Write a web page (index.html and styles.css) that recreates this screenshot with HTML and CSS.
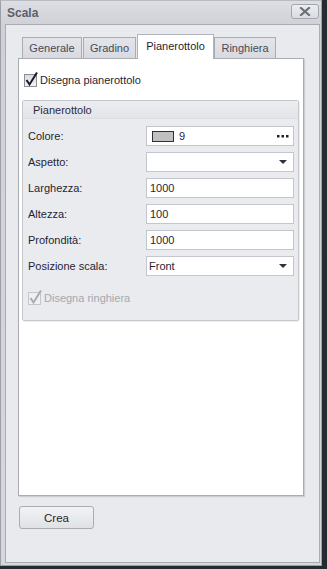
FILE: index.html
```html
<!DOCTYPE html>
<html lang="it">
<head>
    <meta charset="UTF-8">
    <meta name="viewport" content="width=device-width, initial-scale=1.0">
    <title>Scala</title>
    <link rel="stylesheet" href="styles.css">
</head>
<body>
    <div class="window">
        <div class="titlebar">
            <span class="title">Scala</span>
            <button class="close-btn">
                <svg width="12" height="9" viewBox="0 0 12 9">
                    <path d="M2 1 L10 8 M10 1 L2 8" stroke="#6b6f78" stroke-width="2.2" stroke-linecap="square"/>
                </svg>
            </button>
        </div>

        <div class="client">
            <!-- schede -->
            <div class="tabs">
                <div class="tab tab-generale">Generale</div>
                <div class="tab tab-gradino">Gradino</div>
                <div class="tab tab-pianerottolo active">Pianerottolo</div>
                <div class="tab tab-ringhiera">Ringhiera</div>
            </div>

            <div class="tab-panel">
                <label class="check">
                    <span class="box">
                        <svg width="15" height="16" viewBox="0 0 15 16">
                            <path d="M2.5 9 L5.5 13.5 L13 1.5" fill="none" stroke="#1c1c24" stroke-width="2"/>
                        </svg>
                    </span>
                    Disegna pianerottolo
                </label>

                <div class="group">
                    <div class="group-header">Pianerottolo</div>
                    <div class="group-body">
                        <div class="row">
                            <span class="label">Colore:</span>
                            <div class="field">
                                <span class="swatch"></span>
                                <span class="value">9</span>
                                <svg class="dots" width="12" height="3" viewBox="0 0 12 3">
                                    <rect x="0" y="0" width="2.5" height="2.5" fill="#202030"/>
                                    <rect x="4.5" y="0" width="2.5" height="2.5" fill="#202030"/>
                                    <rect x="9" y="0" width="2.5" height="2.5" fill="#202030"/>
                                </svg>
                            </div>
                        </div>
                        <div class="row">
                            <span class="label">Aspetto:</span>
                            <div class="field">
                                <span class="value"></span>
                                <span class="arrow"></span>
                            </div>
                        </div>
                        <div class="row">
                            <span class="label">Larghezza:</span>
                            <div class="field"><span class="value">1000</span></div>
                        </div>
                        <div class="row">
                            <span class="label">Altezza:</span>
                            <div class="field"><span class="value">100</span></div>
                        </div>
                        <div class="row">
                            <span class="label">Profondità:</span>
                            <div class="field"><span class="value">1000</span></div>
                        </div>
                        <div class="row">
                            <span class="label">Posizione scala:</span>
                            <div class="field">
                                <span class="value combo">Front</span>
                                <span class="arrow"></span>
                            </div>
                        </div>

                        <label class="check disabled">
                            <span class="box">
                                <svg width="15" height="16" viewBox="0 0 15 16">
                                    <path d="M2.5 9 L5.5 13.5 L13 1.5" fill="none" stroke="#a9abb1" stroke-width="2"/>
                                </svg>
                            </span>
                            Disegna ringhiera
                        </label>
                    </div>
                </div>
            </div>

            <div class="actions">
                <button class="btn">Crea</button>
            </div>
        </div>
    </div>
</body>
</html>
```

FILE: styles.css
```css
* {
    box-sizing: border-box;
    margin: 0;
    padding: 0;
}

body {
    width: 327px;
    height: 569px;
    background: #262a31;
    font-family: 'Liberation Sans', Arial, sans-serif;
    font-size: 11px;
    color: #1f1f36;
    overflow: hidden;
}

.window {
    width: 322px;
    height: 566px;
    display: flex;
    flex-direction: column;
    background: linear-gradient(180deg, #dcdee3 0px, #cfd1d7 24px, #d6d8dd 100%);
    border: 1px solid #9c9fa6;
    border-top-color: #b8bbc1;
}

.titlebar {
    height: 23px;
    display: flex;
    align-items: center;
    justify-content: space-between;
    padding: 0 2px 0 6px;
}

.title {
    font-weight: 700;
    font-size: 12px;
    color: #5b606b;
}

.close-btn {
    width: 28px;
    height: 15px;
    margin-top: -3px;
    display: flex;
    align-items: center;
    justify-content: center;
    border: 1px solid #a3a6ad;
    border-radius: 3px;
    background: linear-gradient(180deg, #eceef1, #d9dbe0);
}

.client {
    flex: 1;
    margin: 0 1px 2px 4px;
    display: flex;
    flex-direction: column;
    background: #e9eaee;
    border: 1px solid #a9acb3;
    padding: 8px 15px 0 12px;
}

/* schede */
.tabs {
    display: flex;
    align-items: flex-end;
    height: 25px;
    padding-left: 4px;
    position: relative;
    z-index: 1;
}

.tab {
    height: 21px;
    margin-right: 1px;
    display: flex;
    align-items: center;
    justify-content: center;
    border: 1px solid #a9acb3;
    border-bottom: none;
    background: linear-gradient(180deg, #e4e5ea, #d8dadf);
    color: #464b57;
}

.tab-generale { width: 60px; }
.tab-gradino { width: 53px; }
.tab-pianerottolo { width: 77px; }
.tab-ringhiera { width: 62px; }

.tab.active {
    height: 25px;
    margin-right: 0;
    margin-bottom: -1px;
    padding-bottom: 3px;
    background: #ffffff;
    color: #1f1f2c;
    border-color: #b0b3ba;
}

.tab-panel {
    height: 438px;
    background: #ffffff;
    border: 1px solid #a9acb3;
    box-shadow: 1px 1px 1px rgba(0, 0, 0, 0.12);
    padding: 13px 4px 0 3px;
}

.check {
    display: flex;
    align-items: center;
    gap: 3px;
    height: 16px;
    padding-left: 2px;
}

.check .box {
    width: 13px;
    height: 13px;
    border: 1px solid #8a8e97;
    background: linear-gradient(180deg, #d9dbe0, #f3f4f6);
    position: relative;
}

.check .box svg {
    position: absolute;
    left: -1px;
    top: -4px;
}

.check.disabled {
    color: #a5a8ae;
    margin-top: 8px;
    padding-left: 1px;
}

.check.disabled .box {
    border-color: #c4c6cb;
    background: #eef0f2;
}

.group {
    margin-top: 12px;
    height: 221px;
    border: 1px solid #c5c7cd;
    border-radius: 2px;
    background: #eaebee;
    box-shadow: 1px 1px 0 rgba(0, 0, 0, 0.06);
}

.group-header {
    height: 18px;
    padding-left: 10px;
    display: flex;
    align-items: center;
    background: linear-gradient(180deg, #eceef1, #e3e4e8);
    border-bottom: 1px solid #dcdde2;
    color: #2a2a3e;
}

.group-body {
    padding: 7px 4px 0 4px;
    display: flex;
    flex-direction: column;
    gap: 6px;
}

.row {
    display: flex;
    align-items: center;
    justify-content: space-between;
    height: 20px;
}

.label {
    padding-left: 1px;
}

.field {
    width: 148px;
    height: 20px;
    display: flex;
    align-items: center;
    background: #ffffff;
    border: 1px solid #c3c6cc;
    padding: 0 0 0 3px;
}

.field .value {
    flex: 1;
}

.field .combo {
    margin-left: -1px;
}

.swatch {
    width: 22px;
    height: 11px;
    margin: 0 5px 0 2px;
    background: #c0c0c0;
    border: 1px solid #303038;
}

.dots {
    margin-right: 4px;
}

.arrow {
    width: 0;
    height: 0;
    margin-right: 6px;
    border-left: 4px solid transparent;
    border-right: 4px solid transparent;
    border-top: 4px solid #30303a;
}

.actions {
    padding-top: 10px;
}

.btn {
    width: 75px;
    height: 23px;
    margin-left: 1px;
    font-family: inherit;
    font-size: 11.5px;
    color: #1f1f36;
    border: 1px solid #a9acb3;
    border-radius: 3px;
    background: linear-gradient(180deg, #f2f3f5, #dfe1e5);
}
```
